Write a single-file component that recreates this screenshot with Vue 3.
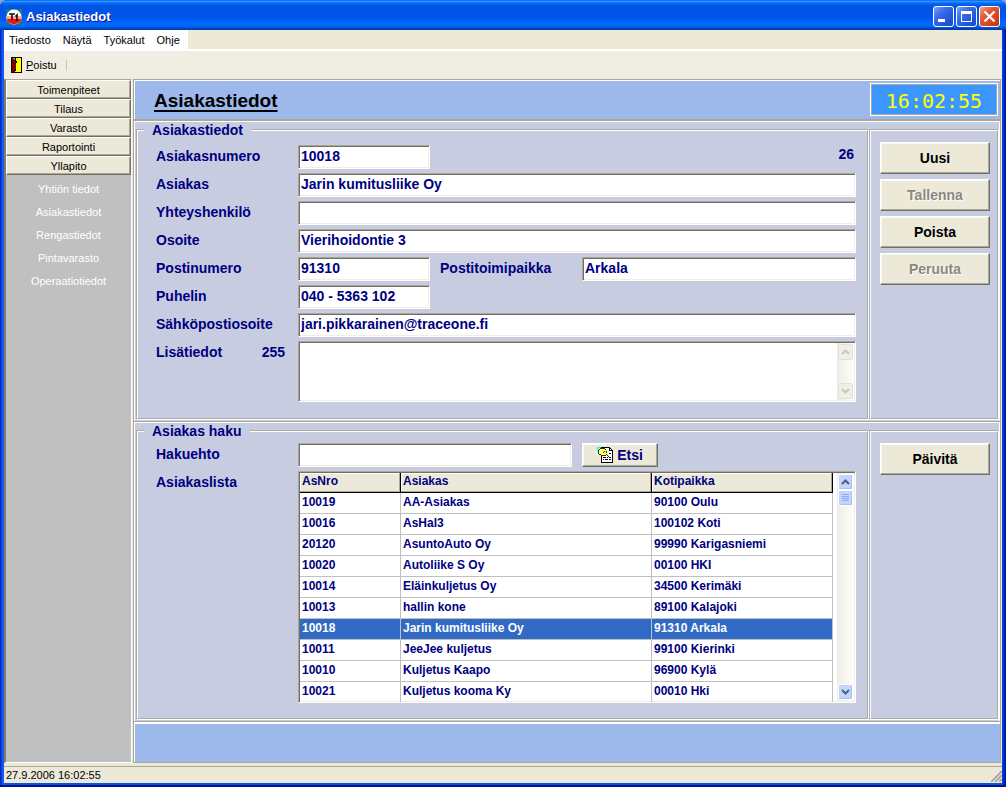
<script setup>
import { ref } from 'vue'

const menus = ['Tiedosto', 'Näytä', 'Työkalut', 'Ohje']
const groups = ['Toimenpiteet', 'Tilaus', 'Varasto', 'Raportointi', 'Yllapito']
const pages = ['Yhtiön tiedot', 'Asiakastiedot', 'Rengastiedot', 'Pintavarasto', 'Operaatiotiedot']

const customer = ref({
  number: '10018',
  name: 'Jarin kumitusliike Oy',
  contact: '',
  address: 'Vierihoidontie 3',
  zip: '91310',
  city: 'Arkala',
  phone: '040 - 5363 102',
  email: 'jari.pikkarainen@traceone.fi',
  notes: ''
})
const query = ref('')
const selected = ref('10018')

const rows = [
  ['10019', 'AA-Asiakas', '90100 Oulu'],
  ['10016', 'AsHal3', '100102 Koti'],
  ['20120', 'AsuntoAuto Oy', '99990 Karigasniemi'],
  ['10020', 'Autoliike S Oy', '00100 HKI'],
  ['10014', 'Eläinkuljetus Oy', '34500 Kerimäki'],
  ['10013', 'hallin kone', '89100 Kalajoki'],
  ['10018', 'Jarin kumitusliike Oy', '91310 Arkala'],
  ['10011', 'JeeJee kuljetus', '99100 Kierinki'],
  ['10010', 'Kuljetus Kaapo', '96900 Kylä'],
  ['10021', 'Kuljetus kooma Ky', '00010 Hki']
]
</script>

<template>
  <div class="window">
    <header class="titlebar">
      <svg class="app-icon" width="16" height="16" viewBox="0 0 16 16">
        <rect width="16" height="16" fill="#1c7a86" />
        <circle cx="8" cy="8" r="7.6" fill="#fff" />
        <path d="M.5 9h15a7.6 7.6 0 0 1-15 0z" fill="#f01010" />
        <rect x=".6" y="7" width="14.8" height="3" fill="#f6a8a0" />
        <path d="M3 5h6M6 5v6M9.500 7.500L11 6v6" fill="none" stroke="#111" stroke-width="1.600" />
      </svg>
      <h1>Asiakastiedot</h1>
      <button class="win" aria-label="Pienennä">
        <svg width="19" height="19" viewBox="0 0 19 19"><path d="M4 13.500h7" stroke="#fff" stroke-width="3" /></svg>
      </button>
      <button class="win" aria-label="Suurenna">
        <svg width="19" height="19" viewBox="0 0 19 19"><path d="M4.500 5v9.500h10V5" fill="none" stroke="#fff" /><path d="M4 5.500h11" stroke="#fff" stroke-width="3" /></svg>
      </button>
      <button class="win close" aria-label="Sulje">
        <svg width="19" height="19" viewBox="0 0 19 19"><path d="M4.500 4.500l10 10M14.500 4.500l-10 10" stroke="#fff" stroke-width="2.200" /></svg>
      </button>
    </header>

    <div class="client">
      <nav class="menubar">
        <div class="menus">
          <button v-for="m in menus" :key="m">{{ m }}</button>
        </div>
      </nav>
      <div class="toolbar">
        <button class="tool">
          <svg width="11" height="16" viewBox="0 0 11 16" shape-rendering="crispEdges">
            <rect width="11" height="16" fill="#000" />
            <rect x="1" y="1" width="9" height="14" fill="#ff0" />
            <path d="M1 1h1v1h1v1h2v10H4v1H3v1H1z" fill="#800000" />
            <path d="M2 1h2v1H2zM3 2h1v1H3z" fill="#0cc" />
            <path d="M4 1h1v3H4zM5 4h1v2H5zM4 6h1v1H4zM4 12h1v2H4zM3 14h1v1H3z" fill="#000" />
          </svg>
          <span><u>P</u>oistu</span>
        </button>
        <i class="sep"></i>
      </div>

      <div class="body">
        <aside class="sidebar">
          <button v-for="g in groups" :key="g" class="group">{{ g }}</button>
          <nav class="pages">
            <a v-for="p in pages" :key="p" href="#">{{ p }}</a>
          </nav>
        </aside>

        <main class="main">
          <div class="banner">
            <h2>Asiakastiedot</h2>
            <time class="clock">16:02:55</time>
          </div>

          <section class="section">
            <fieldset class="details">
              <legend>Asiakastiedot</legend>
              <div class="form">
                <label for="number">Asiakasnumero</label>
                <input id="number" v-model="customer.number" class="field" />
                <output class="count">26</output>
                <label for="name">Asiakas</label>
                <input id="name" v-model="customer.name" class="field wide" />
                <label for="contact">Yhteyshenkilö</label>
                <input id="contact" v-model="customer.contact" class="field wide" />
                <label for="address">Osoite</label>
                <input id="address" v-model="customer.address" class="field wide" />
                <label for="zip">Postinumero</label>
                <input id="zip" v-model="customer.zip" class="field" />
                <label for="city" class="inner">Postitoimipaikka</label>
                <input id="city" v-model="customer.city" class="field" />
                <label for="phone">Puhelin</label>
                <input id="phone" v-model="customer.phone" class="field" />
                <label for="email">Sähköpostiosoite</label>
                <input id="email" v-model="customer.email" class="field wide" />
                <label for="notes" class="split">Lisätiedot <span>255</span></label>
                <div class="sunken notes wide">
                  <textarea id="notes" v-model="customer.notes"></textarea>
                  <div class="scroll off">
                    <button disabled aria-label="Ylös"><svg width="9" height="6" viewBox="0 0 9 6"><path d="M1 5l3.500-3.500L8 5" /></svg></button>
                    <button disabled aria-label="Alas"><svg width="9" height="6" viewBox="0 0 9 6"><path d="M1 1l3.500 3.500L8 1" /></svg></button>
                  </div>
                </div>
              </div>
            </fieldset>
            <div class="actions">
              <button class="btn">Uusi</button>
              <button class="btn" disabled>Tallenna</button>
              <button class="btn">Poista</button>
              <button class="btn" disabled>Peruuta</button>
            </div>
          </section>

          <section class="section grow">
            <fieldset class="search">
              <legend>Asiakas haku</legend>
              <div class="finder">
                <label for="query">Hakuehto</label>
                <div class="query">
                  <input id="query" v-model="query" class="field" />
                  <button class="btn find">
                    <svg width="16" height="16" viewBox="0 0 16 16" shape-rendering="crispEdges">
                      <path d="M4.500 .5h8l3 3v12h-11z" fill="#fff" stroke="#000" />
                      <path d="M12.500 .5v3h3" fill="none" stroke="#000" />
                      <path d="M0 0h4v1H2v1H1v2H0z" fill="#0ff" />
                      <path d="M3 1h5v1h2v2h1v4h1v1h-1V8H9v1H5V8H3V7H2V2h1z" fill="#ffff80" />
                      <path d="M3 1h5v1H3zM2 2h1v1H2zM1 3h1v4H1zM2 7h2v1H2zM4 8h5v1H4zM9 7h1v1H9zM10 8h1v1h-1zM11 9h1v1h-1zM8 2h1v1H8zM7 4h1v1H7zM6 5h1v1H6zM9 4h1v2H9z" fill="#333300" />
                      <path d="M7 6.500h0M12 6.500h2M6 10.500h3m1 0h1m1 0h2M6 12.500h1m1 0h3m1 0h2" stroke="#000" />
                    </svg>
                    Etsi
                  </button>
                </div>
                <span class="caption" id="listcap">Asiakaslista</span>
                <div class="sunken list">
                  <table aria-labelledby="listcap">
                    <colgroup><col class="c1" /><col class="c2" /><col /></colgroup>
                    <thead>
                      <tr><th>AsNro</th><th>Asiakas</th><th>Kotipaikka</th></tr>
                    </thead>
                    <tbody>
                      <tr v-for="r in rows" :key="r[0]" :class="{ on: r[0] === selected }" @click="selected = r[0]">
                        <td v-for="c in r" :key="c">{{ c }}</td>
                      </tr>
                    </tbody>
                  </table>
                  <div class="scroll">
                    <button aria-label="Ylös"><svg width="9" height="6" viewBox="0 0 9 6"><path d="M1 5l3.500-3.500L8 5" /></svg></button>
                    <div class="thumb"><svg width="8" height="8" viewBox="0 0 8 8"><path d="M0 .5h7M0 2.500h7M0 4.500h7M0 6.500h7" /></svg></div>
                    <button aria-label="Alas"><svg width="9" height="6" viewBox="0 0 9 6"><path d="M1 1l3.500 3.500L8 1" /></svg></button>
                  </div>
                </div>
              </div>
            </fieldset>
            <div class="actions">
              <button class="btn">Päivitä</button>
            </div>
          </section>

          <div class="bottom"></div>
        </main>
      </div>

      <footer class="status">
        <span>27.9.2006 16:02:55</span>
        <svg width="12" height="12" viewBox="0 0 12 12">
          <path d="M0 12L12 0M4 12l8-8M8 12l4-4" stroke="#fff" stroke-width="1.500" />
          <path d="M1 12L12 1M5 12l7-7M9 12l3-3" stroke="#aca899" stroke-width="2" />
        </svg>
      </footer>
    </div>
  </div>
</template>

<style>
body {
  margin: 0;
  background: #8aa0d8;
}
</style>

<style scoped>
* {
  box-sizing: border-box;
}
button,
input,
textarea {
  font: inherit;
  color: inherit;
  margin: 0;
  border-radius: 0;
}
.window {
  display: flex;
  flex-direction: column;
  min-height: 100vh;
  padding: 0 4px 4px;
  border-radius: 7px 7px 0 0;
  background: linear-gradient(90deg, #0019cf 0, #0831d9 1px, #166aee 3px, #0855dd 4px, #0855dd calc(100% - 4px), #0048f1 calc(100% - 4px), #0029c8 calc(100% - 2px), #00138c);
  box-shadow: inset 0 -2px #00138c;
  font: 11px/14px "Liberation Sans", Arial, sans-serif;
  color: #000;
}
.titlebar {
  display: flex;
  align-items: center;
  gap: 2px;
  height: 30px;
  margin: 0 -4px;
  padding: 3px 6px 0 6px;
  border-radius: 7px 7px 0 0;
  background: linear-gradient(#0058ee 0, #3593ff 4%, #288eff 6%, #127dff 8%, #036ffc 10%, #0262ee 14%, #0057e5 20%, #0054e3 24%, #0055eb 56%, #005bf5 66%, #026afe 76%, #0062ef 90%, #0052d6 92%, #0040ab 98%, #003092);
}
.titlebar h1 {
  flex: 1;
  margin: 0 0 0 2px;
  font-size: 13px;
  line-height: 16px;
  font-weight: bold;
  color: #fff;
  text-shadow: 1px 1px #0f1089;
}
.win {
  display: flex;
  width: 21px;
  height: 21px;
  padding: 0;
  border: 1px solid #fff;
  border-radius: 3px;
  background: linear-gradient(135deg, #7da2f5, #3a6bea 35%, #2356d8 70%, #1b48c2);
}
.win.close {
  background: linear-gradient(135deg, #f0a08a, #e25a35 35%, #d8431c 70%, #b83312);
}
.client {
  flex: 1;
  display: flex;
  flex-direction: column;
  background: #ece9d8;
}
.menubar {
  height: 21px;
  border-bottom: 2px solid #fff;
}
.menus {
  display: inline-flex;
  height: 19px;
  padding-right: 1px;
  background: #fff;
}
.menus button {
  padding: 0 7px 0 5px;
  border: 0;
  background: none;
}
.toolbar {
  display: flex;
  align-items: center;
  gap: 9px;
  height: 28px;
  padding: 0 7px;
  background: #f0eee2;
}
.tool {
  display: flex;
  align-items: center;
  gap: 4px;
  padding: 0;
  border: 0;
  background: none;
}
.sep {
  width: 1px;
  height: 11px;
  background: #d0c890;
}
.body {
  flex: 1;
  display: flex;
  gap: 1px;
  background: #ece9d8;
}
.sidebar {
  width: 128px;
  border: solid;
  border-width: 1px 1px 1px 2px;
  border-color: #aca899 #fff #fff #7f7c70;
  background: #c0c0c0;
}
.group {
  display: block;
  width: 100%;
  height: 19px;
  padding: 0;
  border: 1px solid;
  border-color: #fff #716f64 #716f64 #fff;
  box-shadow: inset -1px -1px #aca899;
  background: #ece9d8;
}
.pages {
  padding-top: 3px;
}
.pages a {
  display: block;
  line-height: 23px;
  text-align: center;
  color: #fff;
  text-decoration: none;
}
.main {
  flex: 1;
  min-width: 0;
  display: flex;
  flex-direction: column;
  margin-right: 1px;
  border-left: 1px solid #aca899;
  background: #c8cce0;
}
.banner {
  display: flex;
  align-items: center;
  justify-content: space-between;
  height: 41px;
  padding: 0 2px 0 20px;
  border: solid #aca899;
  border-width: 1px 1px 1px 0;
  box-shadow: inset 1px 1px #fff;
  background: #9db8ea;
}
.banner h2 {
  margin: 2px 0 0;
  font-size: 19px;
  line-height: 22px;
  font-weight: bold;
  text-decoration: underline;
  text-decoration-thickness: 2px;
  text-underline-offset: 3px;
}
.clock {
  width: 128px;
  height: 33px;
  border: 1px solid #fff;
  box-shadow: inset 1px 1px #aca899, inset -1px -1px #aca899;
  background: #3c96ff;
  font: 20px/34px "DejaVu Sans Mono", monospace;
  text-align: center;
  color: #ff0;
}
.section {
  display: grid;
  grid-template-columns: 1fr 130px;
  padding: 1px 1px 1px 2px;
  border: solid;
  border-width: 1px 1px 0 0;
  border-color: #aca899;
  box-shadow: inset 1px 1px #fff, inset -1px 0 #fff;
}
.grow {
  flex: 1;
}
fieldset {
  min-width: 0;
  margin: 0;
  border: 2px groove #fff;
  font: bold 14px/16px "Liberation Sans", Arial, sans-serif;
  color: #000080;
}
.details {
  padding: 7px 11px 16px 18px;
}
.search {
  padding: 4px 11px 0 18px;
}
legend {
  margin-left: -12px;
  padding: 0 8px;
}
.form {
  display: grid;
  grid-template-columns: 142px 132px 152px 1fr;
  gap: 4px 0;
}
label,
.caption {
  line-height: 22px;
}
.form > label:not(.inner) {
  grid-column: 1;
}
.inner {
  padding-left: 10px;
}
.split {
  display: flex;
  justify-content: space-between;
  padding-right: 13px;
}
.wide {
  grid-column: 2 / -1;
}
.count {
  grid-column: 4;
  justify-self: end;
  padding-right: 2px;
  line-height: 18px;
}
.field,
.sunken {
  min-width: 0;
  border: 1px solid;
  border-color: #aca899 #fff #fff #aca899;
  box-shadow: inset 1px 1px #716f64, inset -1px -1px #f1efe2;
  background: #fff;
}
.field {
  width: 100%;
  height: 24px;
  padding: 0 2px 2px;
  outline: 0;
}
.sunken {
  display: flex;
  padding: 1px;
}
.notes {
  height: 61px;
}
.notes textarea {
  flex: 1;
  padding: 0 1px;
  border: 0;
  outline: 0;
  resize: none;
  background: none;
}
.scroll {
  display: flex;
  flex-direction: column;
  width: 17px;
  padding: 1px;
  background: linear-gradient(90deg, #eeede5, #fefefb);
}
.scroll button,
.thumb {
  display: flex;
  align-items: center;
  justify-content: center;
  width: 15px;
  height: 16px;
  padding: 0;
  border: 1px solid #fff;
  border-radius: 2px;
  box-shadow: inset -1px -1px #a9c0f3;
  background: #c3d5fd;
}
.scroll button:last-child {
  margin-top: auto;
}
.scroll path {
  fill: none;
  stroke: #4d6185;
  stroke-width: 2;
}
.scroll .thumb path {
  stroke: #8caaf0;
  stroke-width: 1;
}
.off button {
  border-color: #e3e1d6;
  box-shadow: none;
  background: #f1f0e8;
}
.off path {
  stroke: #c9c7ba;
}
.actions {
  display: flex;
  flex-direction: column;
  gap: 5px;
  margin-top: 7px;
  padding: 11px 7px 0 9px;
  border: 2px groove #fff;
  font: bold 14px/16px "Liberation Sans", Arial, sans-serif;
}
.btn {
  height: 32px;
  padding: 0;
  border: 1px solid;
  border-color: #fff #716f64 #716f64 #fff;
  box-shadow: inset -1px -1px #aca899, inset 1px 1px #f8f7f0;
  background: #ece9d8;
}
.btn:disabled {
  color: #8a887c;
  text-shadow: 1px 1px #fff;
}
.finder {
  display: grid;
  grid-template-columns: 142px 1fr;
  gap: 4px 0;
}
.query {
  display: grid;
  grid-template-columns: 274px 76px;
  gap: 10px;
}
.find {
  display: flex;
  align-items: center;
  justify-content: center;
  gap: 4px;
  height: 24px;
}
.list {
  height: 232px;
  overflow: hidden;
}
table {
  flex: 1;
  height: 230px;
  margin-right: 4px;
  border-spacing: 0;
  table-layout: fixed;
  font-size: 12px;
  line-height: 14px;
}
.c1 {
  width: 101px;
}
.c2 {
  width: 251px;
}
th,
td {
  padding: 0 0 3px 2px;
  text-align: left;
  white-space: nowrap;
}
th {
  height: 20px;
  border: solid #000;
  border-width: 0 1px 1px 0;
  box-shadow: inset -1px -1px #aca899, inset 1px 1px #fff;
  background: #ece9d8;
}
td {
  height: 21px;
  border: solid #c0c0c0;
  border-width: 0 1px 1px 0;
}
.on td {
  background: #316ac5;
  color: #fff;
}
.bottom {
  height: 42px;
  border: solid #aca899;
  border-width: 1px 1px 1px 0;
  box-shadow: inset 1px 2px #fff;
  background: #9db8ea;
}
.status {
  display: flex;
  justify-content: space-between;
  align-items: flex-end;
  height: 17px;
  margin-top: 3px;
  padding: 0 0 1px 2px;
  border-top: 1px solid #aca899;
}
</style>
